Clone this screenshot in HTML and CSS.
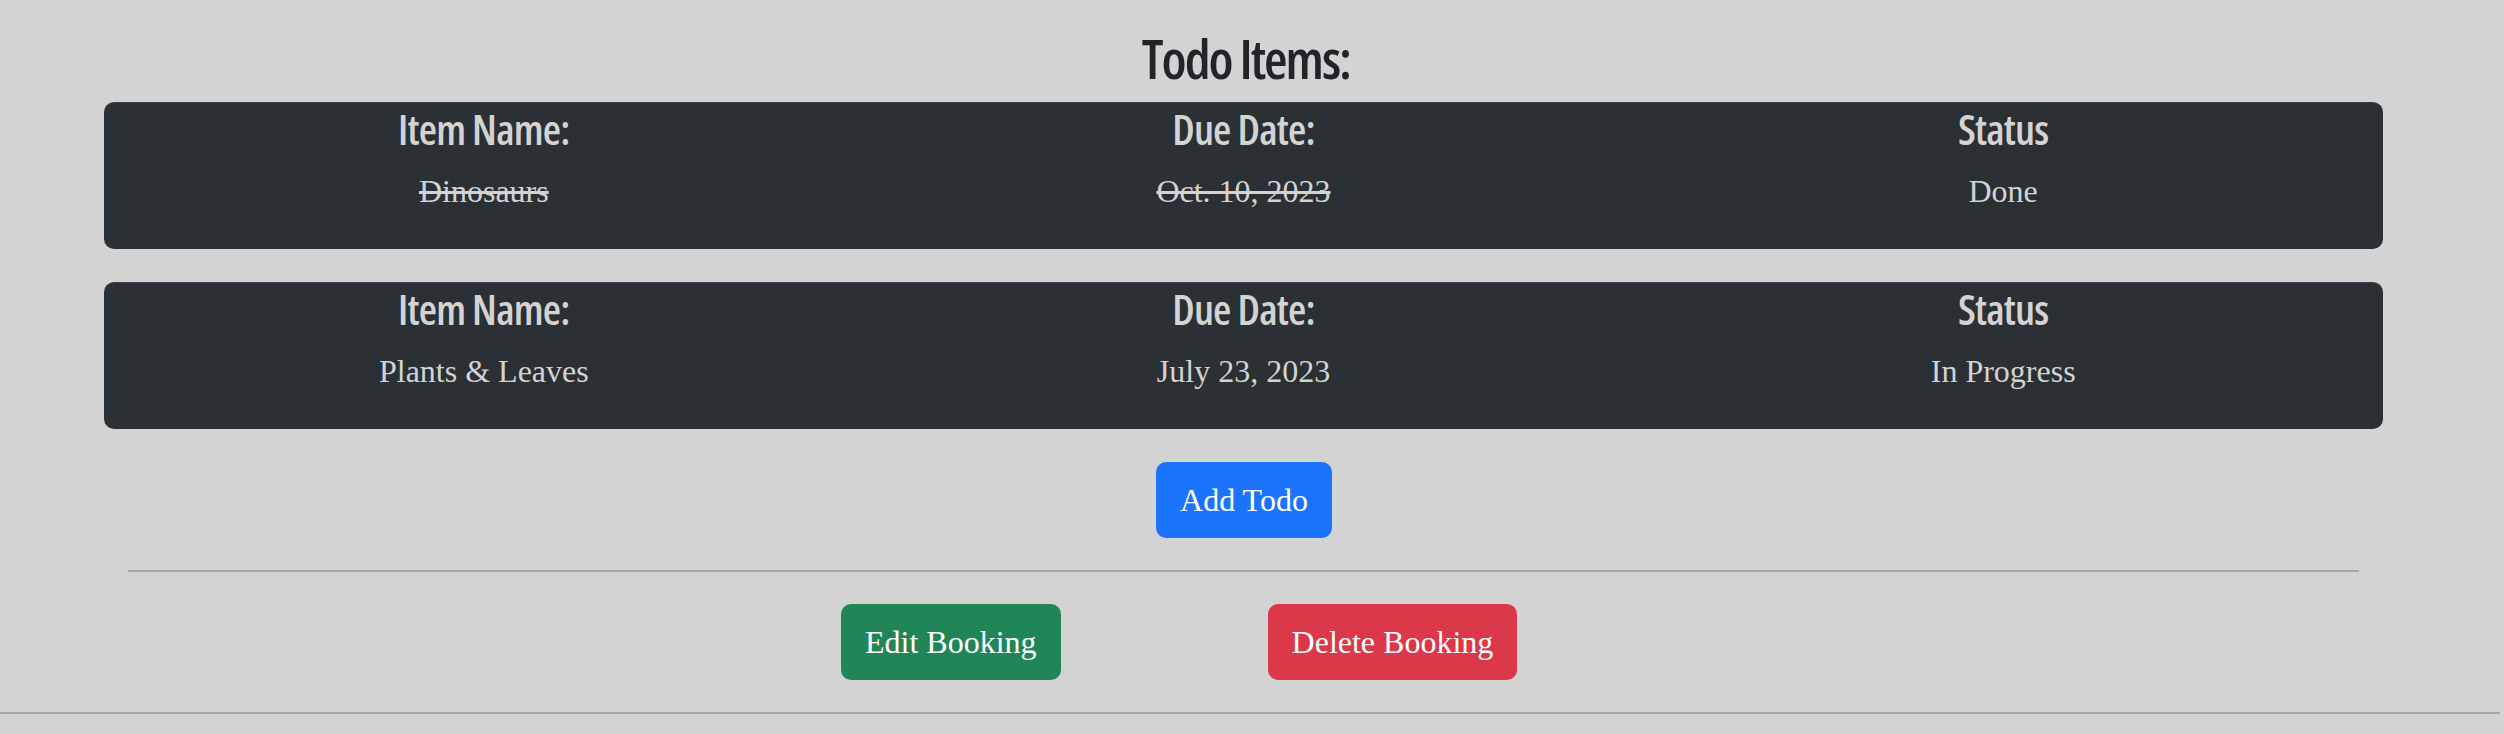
FILE: index.html
```html
<!DOCTYPE html>
<html>
<head>
<meta charset="utf-8">
<link rel="stylesheet" href="styles.css">
</head>
<body>
<h2 class="title">Todo Items:</h2>
<div class="cards">
  <div class="card">
    <div class="col"><h4 class="label">Item Name:</h4><p class="value done">Dinosaurs</p></div>
    <div class="col"><h4 class="label">Due Date:</h4><p class="value done">Oct. 10, 2023</p></div>
    <div class="col"><h4 class="label">Status</h4><p class="value">Done</p></div>
  </div>
  <div class="card">
    <div class="col"><h4 class="label">Item Name:</h4><p class="value">Plants &amp; Leaves</p></div>
    <div class="col"><h4 class="label">Due Date:</h4><p class="value">July 23, 2023</p></div>
    <div class="col"><h4 class="label">Status</h4><p class="value">In Progress</p></div>
  </div>
</div>
<div class="add-row"><button class="btn btn-blue">Add Todo</button></div>
<hr class="rule">
<div class="actions">
  <button class="btn btn-green">Edit Booking</button>
  <button class="btn btn-red">Delete Booking</button>
</div>
<hr class="rule-full">
</body>
</html>
```
FILE: styles.css
```css
html, body {
  margin: 0;
  padding: 0;
  background: #d3d3d3;
}
body {
  font-family: "Liberation Serif", "Times New Roman", serif;
}
.title {
  margin: 0 0 14px 0;
  padding-top: 28px;
  text-align: center;
  font-family: "Open Sans", sans-serif;
  font-stretch: 75%;
  font-weight: 560;
  font-size: 54px;
  line-height: 60px;
  letter-spacing: -2px;
  color: #212529;
  padding-right: 12px;
}
.cards {
  display: flex;
  flex-direction: column;
  gap: 33px;
  padding: 0 121px 0 104px;
}
.card {
  display: grid;
  grid-template-columns: 1fr 1fr 1fr;
  height: 147px;
  box-sizing: border-box;
  background: #2b3035;
  border-top: 1px solid #3b4147;
  border-radius: 10px;
  padding-top: 2px;
}
.col {
  text-align: center;
  color: #d3d3d3;
}
.label {
  margin: 0;
  font-family: "Open Sans", sans-serif;
  font-stretch: 75%;
  font-weight: 560;
  font-size: 42px;
  line-height: 48px;
  letter-spacing: -0.8px;
}
.value {
  margin: 18px 0 0 0;
  font-size: 32px;
  line-height: 40px;
}
.done {
  text-decoration: line-through;
}
.add-row {
  display: flex;
  justify-content: center;
  margin-top: 33px;
  padding-right: 16px;
}
.btn {
  border: none;
  border-radius: 10px;
  color: #ffffff;
  font-family: "Liberation Serif", "Times New Roman", serif;
  font-size: 32px;
  line-height: 40px;
  padding: 18px 24px;
}
.btn-blue { background: #1c74fd; }
.btn-green { background: #218657; }
.btn-red { background: #db3849; }
.rule {
  border: none;
  height: 2px;
  background: #a6a6a6;
  margin: 32px 145px 0 128px;
}
.actions {
  display: flex;
  gap: 207px;
  margin-top: 32px;
  padding-left: 841px;
}
.rule-full {
  border: none;
  height: 2px;
  background: #a6a6a6;
  margin: 32px 4px 0 0;
}
```
